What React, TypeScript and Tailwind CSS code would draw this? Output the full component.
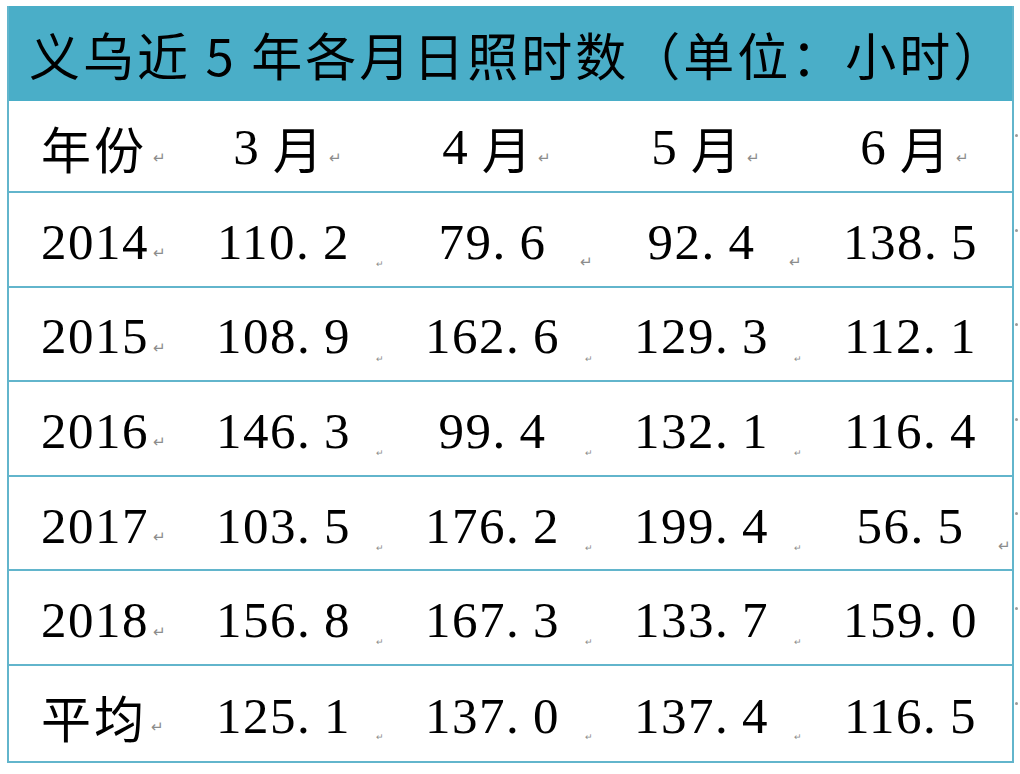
import React from 'react';

const months = ['3', '4', '5', '6'];

// mark: 'r' = return arrow, 'd' = small cell-end dot, '' = none
const rows: { label: string; values: string[]; marks: string[] }[] = [
  { label: '2014', values: ['110.2', '79.6', '92.4', '138.5'], marks: ['d', 'r', 'r', ''] },
  { label: '2015', values: ['108.9', '162.6', '129.3', '112.1'], marks: ['d', 'd', 'd', ''] },
  { label: '2016', values: ['146.3', '99.4', '132.1', '116.4'], marks: ['d', 'd', 'd', ''] },
  { label: '2017', values: ['103.5', '176.2', '199.4', '56.5'], marks: ['d', 'd', 'd', 'r'] },
  { label: '2018', values: ['156.8', '167.3', '133.7', '159.0'], marks: ['d', 'd', 'd', ''] },
  { label: '平均', values: ['125.1', '137.0', '137.4', '116.5'], marks: ['d', 'd', 'd', ''] },
];

const serif = "font-['Liberation_Serif','Noto_Sans_CJK_SC',serif]";
const cjk = "font-['Noto_Sans_CJK_SC','Liberation_Serif',sans-serif]";

function Ret({ small }: { small?: boolean }) {
  return (
    <span
      className={`${serif} text-[#8c8c8c] leading-none ${small ? 'text-[9px]' : 'text-[15px]'}`}
    >
      ↵
    </span>
  );
}

function Num({ value }: { value: string }) {
  const [a, b] = value.split('.');
  return (
    <span className={`${serif} text-[51px] leading-none tracking-[1.5px] text-black`}>
      {a}
      <span className="inline-block w-[27px] text-left">.</span>
      {b}
    </span>
  );
}

export default function App() {
  return (
    <div className="w-[1020px] h-[774px] bg-white pt-[6px] pl-[7px] flex items-start">
      <div className="w-[1007px] border-l-2 border-r-2 border-b-2 border-[#62b5cc]">
        {/* title band */}
        <div className="h-[95px] bg-[#4aaec8] flex items-center pl-[20px] pt-[2px]">
          <span className={`${cjk} text-[51px] leading-none tracking-[3px] text-black whitespace-pre`}>
            义乌近 5 年各月日照时数（单位：小时）
          </span>
        </div>

        {/* month header */}
        <div className="h-[92px] grid grid-cols-[170px_209px_209px_209px_209px] border-b-2 border-[#62b5cc]">
          <div className="flex items-center pl-[32px] gap-[6px] pt-[2px]">
            <span className={`${cjk} text-[50px] leading-none text-black tracking-[3px]`}>年份</span>
            <span className="pt-[20px]"><Ret /></span>
          </div>
          {months.map((m) => (
            <div key={m} className="flex items-center justify-center gap-[6px] pl-[8px] pt-[2px]">
              <span className={`${serif} text-[51px] leading-none text-black`}>{m}</span>
              <span className={`${cjk} text-[50px] leading-none text-black ml-[8px]`}>月</span>
              <span className="pt-[20px]"><Ret /></span>
            </div>
          ))}
        </div>

        {rows.map((r, i) => (
          <div
            key={r.label}
            className={`h-[94.6px] grid grid-cols-[170px_209px_209px_209px_209px] ${
              i < rows.length - 1 ? 'border-b-2 border-[#62b5cc]' : ''
            }`}
          >
            <div className="flex items-center pl-[32px] gap-[4px] pt-[6px]">
              {r.label === '平均' ? (
                <span className={`${cjk} text-[50px] leading-none text-black tracking-[3px]`}>{r.label}</span>
              ) : (
                <span className={`${serif} text-[51px] leading-none tracking-[1.5px] text-black`}>{r.label}</span>
              )}
              <span className="pt-[20px]"><Ret /></span>
            </div>
            {r.values.map((v, j) => (
              <div key={j} className="relative flex items-center justify-center pt-[6px]">
                <Num value={v} />
                {r.marks[j] && (
                  <span className="absolute right-[4px] top-[56px]">
                    <Ret small={r.marks[j] === 'd'} />
                  </span>
                )}
              </div>
            ))}
          </div>
        ))}
      </div>
      {/* row-end marks outside the table */}
      <div className="flex flex-col pt-[100px] pl-[1px]">
        {[0, 1, 2, 3, 4, 5, 6].map((k) => (
          <div key={k} className="h-[94.6px] pt-[28px]">
            <span className="block w-[3px] h-[3px] rounded-full bg-[#9a9a9a]" />
          </div>
        ))}
      </div>
    </div>
  );
}
